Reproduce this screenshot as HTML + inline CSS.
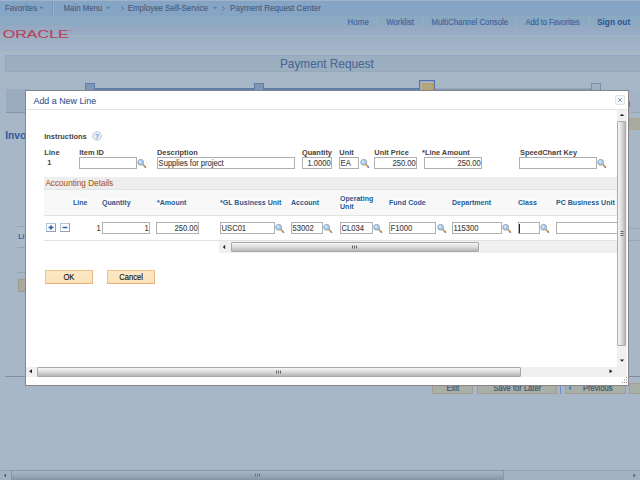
<!DOCTYPE html>
<html><head><meta charset="utf-8"><title>Payment Request</title>
<style>
html,body{margin:0;padding:0;overflow:hidden;}
body{width:640px;height:480px;overflow:hidden;position:relative;background:#a8b7c8;font-family:"Liberation Sans",Arial,sans-serif;font-size:7.5px;color:#3c3c3c;}
.a{position:absolute;white-space:nowrap;line-height:1;}
span.a{-webkit-text-stroke:0.12px;}
#nav{left:0;top:0;width:640px;height:16px;background:#86a5c5;border-top:1px solid #9fb3cb;box-sizing:border-box;}
#hdr{left:0;top:16px;width:640px;height:39px;background:linear-gradient(#8aaac1 0,#8ca9c1 9px,#95a9c3 10.5px,#9babc6 19px,#a0b6c5 19.5px,#9ab0c2 21px,#a0b0c8 27px,#a3b3cb 33.5px,#a0b6ba 34.5px,#a9b8c8 35.5px,#a9b8c8 39px);}
.sep{width:1px;height:9px;top:18px;background:#9bb2c8;}
#ttl{left:5px;top:55px;width:635px;border-right:0 !important;height:17px;background:#9bafc1;border:1px solid #96a9ba;box-sizing:border-box;}
.stop{width:10px;height:8px;top:83px;background:#7f97b4;border:1px solid #5f7ea6;box-sizing:border-box;}
.bbtn{top:383px;height:11px;background:#a7afa7;border:1px solid #a59c94;box-sizing:border-box;}
#dlg{left:25px;top:90px;width:604px;height:296px;background:#fff;border:1px solid #8a8488;border-top-color:#80848e;box-sizing:border-box;}
.in{background:#fff;border:1px solid #b0b0b0;box-sizing:border-box;font-size:7.6px;color:#464646;line-height:11.2px;padding:0 0.6px 0 1px;overflow:hidden;}
.r{text-align:right;}
.btn{background:linear-gradient(#fce8c6,#fbe2b8);border:1px solid #efc48c;border-bottom-color:#e6b078;border-right-color:#e9b882;box-sizing:border-box;height:14px;font-size:7.6px;color:#111;text-align:center;line-height:12.8px;}
.sbh{height:10px;background:#f0f0f0;}
.thh{height:10px;top:0px;background:linear-gradient(#f6f6f6,#dedede 45%,#b6b6b6);border:1px solid #a8a8a8;border-radius:1px;box-sizing:border-box;}
</style></head><body>
<div class="a" id="nav"></div>
<span class="a" style="left:5.00px;top:5px;font-size:7.8px;color:#485d7e;transform:scaleY(1.08);transform-origin:0 6px;">Favorites</span>
<span class="a" style="left:63.60px;top:5px;font-size:7.8px;color:#485d7e;transform:scaleY(1.08);transform-origin:0 6px;">Main Menu</span>
<span class="a" style="left:127.70px;top:5px;font-size:7.95px;color:#485d7e;transform:scaleY(1.08);transform-origin:0 6px;">Employee Self-Service</span>
<span class="a" style="left:230.00px;top:5px;font-size:8.1px;color:#485d7e;transform:scaleY(1.08);transform-origin:0 6px;">Payment Request Center</span>
<svg class="a" style="left:0;top:0" width="330" height="16"><path d="M39.300 6.800h4.400l-2.200 2.500zM106.200 6.800h4.400l-2.200 2.500zM213 6.800h4.400l-2.200 2.500z" fill="#5a7eae"/><path d="M222.300 6.500l2.200 2l-2.200 2M121.300 6.500l2.200 2l-2.200 2" stroke="#4f6588" stroke-width="0.800" fill="none"/></svg>
<div class="a" style="left:52px;top:1px;width:1px;height:15px;background:#7797b9"></div><div class="a" style="left:53px;top:1px;width:1px;height:15px;background:#94b1cf"></div>
<div class="a" id="hdr"></div>
<svg class="a" style="left:0;top:26px" width="80" height="16"><text x="2.800" y="12" font-family="Liberation Sans, Arial, sans-serif" font-size="11.500" fill="#b9455b" stroke="#b9455b" stroke-width="0.200" textLength="66" lengthAdjust="spacingAndGlyphs">ORACLE</text><circle cx="70.500" cy="4.500" r="0.600" fill="#b9455b"/></svg>
<span class="a" style="left:347.50px;top:19px;font-size:7.8px;color:#3b62a0;transform:scaleY(1.08);transform-origin:0 6px;letter-spacing:0.14px;">Home</span>
<span class="a" style="left:386.30px;top:19px;font-size:7.8px;color:#3b62a0;transform:scaleY(1.08);transform-origin:0 6px;letter-spacing:0px;">Worklist</span>
<span class="a" style="left:431.50px;top:19px;font-size:7.8px;color:#3b62a0;transform:scaleY(1.08);transform-origin:0 6px;letter-spacing:0.02px;">MultiChannel Console</span>
<span class="a" style="left:525.40px;top:19px;font-size:7.8px;color:#3b62a0;transform:scaleY(1.08);transform-origin:0 6px;letter-spacing:-0.16px;">Add to Favorites</span>
<span class="a" style="left:597.00px;top:18px;font-size:8.3px;color:#2c5391;font-weight:bold;-webkit-text-stroke:0;transform:scaleY(1.08);transform-origin:0 7px;">Sign out</span>
<div class="a sep" style="left:377px"></div><div class="a sep" style="left:422px"></div><div class="a sep" style="left:516px"></div><div class="a sep" style="left:589px"></div>
<div class="a" id="ttl"></div>
<span class="a" style="left:280.00px;top:59px;font-size:11.8px;color:#4b6896;transform:scaleY(1.08);transform-origin:0 9px;">Payment Request</span>
<div class="a" style="left:88px;top:88px;width:335px;height:2px;background:linear-gradient(#5676a4,#6d88ae)"></div>
<div class="a" style="left:433px;top:88px;width:160px;height:2px;background:linear-gradient(#9dacbe,#8393a8)"></div>
<div class="a stop" style="left:85px"></div>
<div class="a stop" style="left:254px"></div>
<div class="a stop" style="left:591px;background:#9eb0c4;border-color:#7d8ea3"></div>
<div class="a" style="left:419px;top:80px;width:16px;height:12px;border:1px solid #5474a6;box-shadow:inset 0 0 0 1px #8fa6c4;background:#b0bfd0;box-sizing:border-box"></div>
<div class="a" style="left:422px;top:83px;width:11px;height:8px;border:1px solid #c09a50;background:linear-gradient(#a8aa94,#b8a274);box-sizing:border-box"></div>
<div class="a" style="left:6px;top:89px;width:22px;height:23px;background:#9aabbe"></div>
<div class="a" style="left:6px;top:112px;width:22px;height:1px;background:#8496ac"></div>
<span class="a" style="left:5.20px;top:131px;font-size:10.2px;color:#2f5c9c;font-weight:bold;-webkit-text-stroke:0;transform:scaleY(1.08);transform-origin:0 8px;">Invo</span>
<div class="a" style="left:18px;top:227px;width:8px;height:20px;background:#abbac8"></div>
<span class="a" style="left:18.30px;top:233px;font-size:7.05px;color:#3564a8;font-weight:bold;-webkit-text-stroke:0;transform:scaleY(1.08);transform-origin:0 6px;">Li</span>
<div class="a" style="left:17px;top:226px;width:12px;height:1px;background:#94a4b7"></div>
<div class="a" style="left:17px;top:247px;width:12px;height:1px;background:#94a4b7"></div>
<div class="a" style="left:17px;top:272px;width:12px;height:1px;background:#94a4b7"></div>
<div class="a" style="left:18px;top:279px;width:10px;height:13px;background:#aaa9a0;border:1px solid #9c9a8e;box-sizing:border-box"></div>
<div class="a" style="left:5px;top:376px;width:24px;height:1px;background:#7f8ea2"></div>
<div class="a" style="left:629px;top:118px;width:11px;height:12px;background:#a9ab9f;border:1px solid #aca58f;border-right:0;box-sizing:border-box"></div>
<div class="a" style="left:627px;top:112px;width:13px;height:1px;background:#98a8bc"></div>
<div class="a" style="left:629px;top:90px;width:11px;height:22px;background:#a4b4c6"></div>
<div class="a" style="left:628px;top:101px;width:2px;height:6px;background:#5f86b8"></div>
<div class="a" style="left:627px;top:228px;width:13px;height:1px;background:#98a8bc"></div>
<div class="a" style="left:627px;top:240px;width:13px;height:1px;background:#98a8bc"></div>
<div class="a" style="left:627px;top:376px;width:13px;height:1px;background:#7f8ea2"></div>
<div class="a bbtn" style="left:432px;width:41px"></div>
<div class="a bbtn" style="left:477px;width:80px"></div>
<div class="a bbtn" style="left:565px;width:61px"></div>
<div class="a bbtn" style="left:629px;width:11px;border-right:0"></div>
<div class="a" style="left:560px;top:385px;width:1px;height:9px;background:#6f8fc0"></div>
<span class="a" style="left:446.50px;top:385px;font-size:7.6px;color:#3e4e68;transform:scaleY(1.08);transform-origin:0 6px;">Exit</span>
<span class="a" style="left:493.50px;top:385px;font-size:7.6px;color:#3e4e68;transform:scaleY(1.08);transform-origin:0 6px;">Save for Later</span>
<span class="a" style="left:583.00px;top:385px;font-size:7.6px;color:#3e4e68;transform:scaleY(1.08);transform-origin:0 6px;">Previous</span>
<svg class="a" style="left:567px;top:385px" width="6" height="7"><path d="M1.5 3L4 1V5Z" fill="#3f72c0"/></svg>
<div class="a" style="left:0;top:470px;width:640px;height:10px;background:#a3b2c3;border-top:1px solid #93a3b4;box-sizing:border-box"></div>
<div class="a" style="left:11px;top:470px;width:493px;height:10px;background:linear-gradient(#a6b6c6,#9aaaba 50%,#8898aa);border:1px solid #8496a8;box-sizing:border-box"></div>
<svg class="a" style="left:0;top:470px" width="640" height="10"><path d="M4 5.500L6 3.500V7.500ZM635.500 5.500L633.500 3.500V7.500Z" fill="#4a5666"/><path d="M255.500 3.500v3M257.500 3.500v3M259.500 3.500v3" stroke="#6a7a8c" stroke-width="1"/></svg>

<div class="a" id="dlg"></div>
<span class="a" style="left:33.50px;top:97px;font-size:8.9px;color:#3a5a92;transform:scaleY(1.08);transform-origin:0 7px;">Add a New Line</span>
<div class="a" style="left:26px;top:109px;width:602px;height:1px;background:#dfe6e6"></div>
<div class="a" style="left:615px;top:95px;width:10px;height:10px;border:1px solid #e2e4e6;background:#f5f6f7;box-sizing:border-box;border-radius:2px"></div>
<svg class="a" style="left:615px;top:95px" width="10" height="10"><path d="M3.300 3.300L6.700 6.700M6.700 3.300L3.300 6.700" stroke="#7f93aa" stroke-width="1" fill="none"/></svg>
<div class="a" style="left:617px;top:110px;width:10px;height:257px;background:#f0f0f0"></div>
<div class="a" style="left:617px;top:121px;width:9px;height:225px;background:linear-gradient(90deg,#f6f6f6,#e0e0e0 45%,#b8b8b8);border:1px solid #ababab;border-radius:1px;box-sizing:border-box"></div>
<svg class="a" style="left:617px;top:110px" width="10" height="257"><path d="M5 3.800L7.200 6H2.800Z M5 251.800L7.200 249.600H2.800Z" fill="#222"/><path d="M3.500 121.500h3M3.500 123.500h3M3.500 125.500h3" stroke="#666" stroke-width="1"/></svg>
<div class="a sbh" style="left:26px;top:367px;width:601px;"><div class="a thh" style="left:11px;width:484px"></div></div>
<svg class="a" style="left:26px;top:367px" width="601" height="10"><path d="M3 4.300L6 2.300V6.300Z M586.500 4.300L583.500 2.300V6.300Z" fill="#222"/><path d="M250.500 3.500v3M252.500 3.500v3M254.500 3.500v3" stroke="#666" stroke-width="1"/></svg>
<svg class="a" style="left:621px;top:377px" width="7" height="7"><path d="M5 0h1v1h-1zM3 2.500h1v1h-1zM5 2.500h1v1h-1zM1 5h1v1h-1zM3 5h1v1h-1zM5 5h1v1h-1z" fill="#8a8a8a"/></svg>

<span class="a" style="left:44.30px;top:133px;font-size:7.4px;color:#434343;font-weight:bold;-webkit-text-stroke:0;transform:scaleY(1.08);transform-origin:0 6px;">Instructions</span>
<svg class="a" style="left:92px;top:131px" width="10" height="10"><circle cx="5" cy="5" r="4.300" fill="#eaf0f7" stroke="#b4c5da" stroke-width="0.900"/><text x="5" y="7.500" font-size="6.800" font-weight="bold" text-anchor="middle" fill="#6a92c4" font-family="Liberation Sans, Arial, sans-serif">?</text></svg>
<span class="a" style="left:44.30px;top:149px;font-size:7.4px;color:#434343;font-weight:bold;-webkit-text-stroke:0;transform:scaleY(1.08);transform-origin:0 6px;">Line</span>
<span class="a" style="left:79.30px;top:149px;font-size:7.4px;color:#434343;font-weight:bold;-webkit-text-stroke:0;transform:scaleY(1.08);transform-origin:0 6px;">Item ID</span>
<span class="a" style="left:157.00px;top:149px;font-size:7.4px;color:#434343;font-weight:bold;-webkit-text-stroke:0;transform:scaleY(1.08);transform-origin:0 6px;">Description</span>
<span class="a" style="left:302.00px;top:149px;font-size:7.4px;color:#434343;font-weight:bold;-webkit-text-stroke:0;transform:scaleY(1.08);transform-origin:0 6px;">Quantity</span>
<span class="a" style="left:339.30px;top:149px;font-size:7.4px;color:#434343;font-weight:bold;-webkit-text-stroke:0;transform:scaleY(1.08);transform-origin:0 6px;">Unit</span>
<span class="a" style="left:374.30px;top:149px;font-size:7.4px;color:#434343;font-weight:bold;-webkit-text-stroke:0;transform:scaleY(1.08);transform-origin:0 6px;">Unit Price</span>
<span class="a" style="left:422.00px;top:149px;font-size:7.4px;color:#434343;font-weight:bold;-webkit-text-stroke:0;transform:scaleY(1.08);transform-origin:0 6px;">*Line Amount</span>
<span class="a" style="left:520.00px;top:149px;font-size:7.4px;color:#434343;font-weight:bold;-webkit-text-stroke:0;transform:scaleY(1.08);transform-origin:0 6px;">SpeedChart Key</span>
<span class="a" style="left:47.30px;top:159px;font-size:7.4px;color:#434343;font-weight:bold;-webkit-text-stroke:0;transform:scaleY(1.08);transform-origin:0 6px;">1</span>
<div class="a in" style="left:79px;top:157px;width:58px;height:12px;"></div>
<div class="a in" style="left:157px;top:157px;width:138px;height:12px;"></div><span class="a" style="left:158.60px;top:160px;font-size:7.6px;color:#444444;transform:scaleY(1.08);transform-origin:0 6px;">Supplies for project</span>
<div class="a in" style="left:302px;top:157px;width:30px;height:12px;"></div><span class="a" style="right:309.30px;top:160px;font-size:7.6px;color:#444444;transform:scaleY(1.08);transform-origin:0 6px;">1.0000</span>
<div class="a in" style="left:339px;top:157px;width:20px;height:12px;"></div><span class="a" style="left:340.60px;top:160px;font-size:7.6px;color:#444444;transform:scaleY(1.08);transform-origin:0 6px;">EA</span>
<div class="a in" style="left:374px;top:157px;width:43px;height:12px;"></div><span class="a" style="right:224.30px;top:160px;font-size:7.6px;color:#444444;transform:scaleY(1.08);transform-origin:0 6px;">250.00</span>
<div class="a in" style="left:424px;top:157px;width:58px;height:12px;"></div><span class="a" style="right:159.30px;top:160px;font-size:7.6px;color:#444444;transform:scaleY(1.08);transform-origin:0 6px;">250.00</span>
<div class="a in" style="left:519px;top:157px;width:78px;height:12px;"></div>
<svg class="a" style="left:136.5px;top:157px" width="12" height="12" viewBox="0 0 12 12"><path d="M5.8 7.4L8.0 9.7" stroke="#e59a3c" stroke-width="1.8" stroke-linecap="round"/><path d="M8.1 9.8L8.5 10.2" stroke="#5b8fd0" stroke-width="1.5" stroke-linecap="round"/><circle cx="3.7" cy="5.3" r="2.9" fill="#a3cdf5" stroke="#959fa8" stroke-width="0.9"/><circle cx="3.1" cy="4.6" r="1.2" fill="#d6ebfc"/></svg>
<svg class="a" style="left:359.5px;top:157px" width="12" height="12" viewBox="0 0 12 12"><path d="M5.8 7.4L8.0 9.7" stroke="#e59a3c" stroke-width="1.8" stroke-linecap="round"/><path d="M8.1 9.8L8.5 10.2" stroke="#5b8fd0" stroke-width="1.5" stroke-linecap="round"/><circle cx="3.7" cy="5.3" r="2.9" fill="#a3cdf5" stroke="#959fa8" stroke-width="0.9"/><circle cx="3.1" cy="4.6" r="1.2" fill="#d6ebfc"/></svg>
<svg class="a" style="left:597px;top:157px" width="12" height="12" viewBox="0 0 12 12"><path d="M5.8 7.4L8.0 9.7" stroke="#e59a3c" stroke-width="1.8" stroke-linecap="round"/><path d="M8.1 9.8L8.5 10.2" stroke="#5b8fd0" stroke-width="1.5" stroke-linecap="round"/><circle cx="3.7" cy="5.3" r="2.9" fill="#a3cdf5" stroke="#959fa8" stroke-width="0.9"/><circle cx="3.1" cy="4.6" r="1.2" fill="#d6ebfc"/></svg>
<div class="a" style="left:44px;top:177px;width:573px;height:12px;background:#eeeeee"></div>
<div class="a" style="left:44px;top:189px;width:573px;height:1px;background:#dfe6e6"></div>
<div class="a" style="left:44px;top:190px;width:573px;height:25px;background:#f8f8f8"></div>
<div class="a" style="left:44px;top:215px;width:573px;height:1px;background:#e0e2e2"></div>
<div class="a" style="left:44px;top:240px;width:573px;height:1px;background:#e0e2e2"></div>

<span class="a" style="left:45.40px;top:180px;font-size:8.2px;color:#b0652b;transform:scaleY(1.08);transform-origin:0 6px;">Accounting Details</span>
<span class="a" style="left:73.00px;top:199px;font-size:7.05px;color:#28588f;font-weight:bold;-webkit-text-stroke:0;transform:scaleY(1.08);transform-origin:0 6px;background:#fcfcfc;">Line</span>
<span class="a" style="left:102.00px;top:199px;font-size:7.05px;color:#28588f;font-weight:bold;-webkit-text-stroke:0;transform:scaleY(1.08);transform-origin:0 6px;background:#fcfcfc;">Quantity</span>
<span class="a" style="left:157.00px;top:199px;font-size:7.05px;color:#28588f;font-weight:bold;-webkit-text-stroke:0;transform:scaleY(1.08);transform-origin:0 6px;background:#fcfcfc;">*Amount</span>
<span class="a" style="left:220.00px;top:199px;font-size:7.05px;color:#28588f;font-weight:bold;-webkit-text-stroke:0;transform:scaleY(1.08);transform-origin:0 6px;background:#fcfcfc;">*GL Business Unit</span>
<span class="a" style="left:291.00px;top:199px;font-size:7.05px;color:#28588f;font-weight:bold;-webkit-text-stroke:0;transform:scaleY(1.08);transform-origin:0 6px;background:#fcfcfc;">Account</span>
<span class="a" style="left:340.00px;top:195px;font-size:7.05px;color:#28588f;font-weight:bold;-webkit-text-stroke:0;transform:scaleY(1.08);transform-origin:0 6px;background:#fcfcfc;">Operating</span>
<span class="a" style="left:340.00px;top:203px;font-size:7.05px;color:#28588f;font-weight:bold;-webkit-text-stroke:0;transform:scaleY(1.08);transform-origin:0 6px;background:#fcfcfc;">Unit</span>
<span class="a" style="left:389.00px;top:199px;font-size:7.05px;color:#28588f;font-weight:bold;-webkit-text-stroke:0;transform:scaleY(1.08);transform-origin:0 6px;background:#fcfcfc;">Fund Code</span>
<span class="a" style="left:452.00px;top:199px;font-size:7.05px;color:#28588f;font-weight:bold;-webkit-text-stroke:0;transform:scaleY(1.08);transform-origin:0 6px;background:#fcfcfc;">Department</span>
<span class="a" style="left:518.00px;top:199px;font-size:7.05px;color:#28588f;font-weight:bold;-webkit-text-stroke:0;transform:scaleY(1.08);transform-origin:0 6px;background:#fcfcfc;">Class</span>
<span class="a" style="left:556.00px;top:199px;font-size:7.05px;color:#28588f;font-weight:bold;-webkit-text-stroke:0;transform:scaleY(1.08);transform-origin:0 6px;background:#fcfcfc;">PC Business Unit</span>
<svg class="a" style="left:46px;top:223px" width="10" height="9" viewBox="0 0 10 9"><rect x="0.5" y="0.5" width="9" height="8" fill="#fdfdfd" stroke="#90a2b2" stroke-width="1"/><path d="M0.5 8.5V0.5H9.5" fill="none" stroke="#b3c6d6" stroke-width="1"/><path d="M2.6 4.5h4.8M5 2.2v4.6" stroke="#1f5aa8" stroke-width="1.4" fill="none"/></svg>
<svg class="a" style="left:60px;top:223px" width="10" height="9" viewBox="0 0 10 9"><rect x="0.5" y="0.5" width="9" height="8" fill="#fdfdfd" stroke="#90a2b2" stroke-width="1"/><path d="M0.5 8.5V0.5H9.5" fill="none" stroke="#b3c6d6" stroke-width="1"/><path d="M2.6 4.5h4.8" stroke="#1f5aa8" stroke-width="1.4" fill="none"/></svg>
<span class="a" style="left:96.50px;top:225px;font-size:7.6px;color:#4a4640;transform:scaleY(1.08);transform-origin:0 6px;">1</span>
<div class="a in" style="left:102px;top:222px;width:48px;height:12px;"></div><span class="a" style="right:491.30px;top:225px;font-size:7.6px;color:#444444;transform:scaleY(1.08);transform-origin:0 6px;">1</span>
<div class="a in" style="left:156px;top:222px;width:43px;height:12px;"></div><span class="a" style="right:442.30px;top:225px;font-size:7.6px;color:#444444;transform:scaleY(1.08);transform-origin:0 6px;">250.00</span>
<div class="a in" style="left:220px;top:222px;width:55px;height:12px;"></div><span class="a" style="left:221.60px;top:225px;font-size:7.6px;color:#444444;transform:scaleY(1.08);transform-origin:0 6px;">USC01</span>
<div class="a in" style="left:291px;top:222px;width:32px;height:12px;"></div><span class="a" style="left:292.60px;top:225px;font-size:7.6px;color:#444444;transform:scaleY(1.08);transform-origin:0 6px;">53002</span>
<div class="a in" style="left:340px;top:222px;width:33px;height:12px;"></div><span class="a" style="left:341.60px;top:225px;font-size:7.6px;color:#444444;transform:scaleY(1.08);transform-origin:0 6px;">CL034</span>
<div class="a in" style="left:389px;top:222px;width:47px;height:12px;"></div><span class="a" style="left:390.60px;top:225px;font-size:7.6px;color:#444444;transform:scaleY(1.08);transform-origin:0 6px;">F1000</span>
<div class="a in" style="left:452px;top:222px;width:50px;height:12px;"></div><span class="a" style="left:453.60px;top:225px;font-size:7.6px;color:#444444;transform:scaleY(1.08);transform-origin:0 6px;">115300</span>
<div class="a in" style="left:518px;top:222px;width:22px;height:12px;"></div>
<div class="a" style="left:519px;top:224px;width:1px;height:9px;background:#222"></div>
<div class="a in" style="left:556px;top:222px;width:61px;height:12px;border-right:0;"></div>
<svg class="a" style="left:274.5px;top:222px" width="12" height="12" viewBox="0 0 12 12"><path d="M5.8 7.4L8.0 9.7" stroke="#e59a3c" stroke-width="1.8" stroke-linecap="round"/><path d="M8.1 9.8L8.5 10.2" stroke="#5b8fd0" stroke-width="1.5" stroke-linecap="round"/><circle cx="3.7" cy="5.3" r="2.9" fill="#a3cdf5" stroke="#959fa8" stroke-width="0.9"/><circle cx="3.1" cy="4.6" r="1.2" fill="#d6ebfc"/></svg>
<svg class="a" style="left:322.5px;top:222px" width="12" height="12" viewBox="0 0 12 12"><path d="M5.8 7.4L8.0 9.7" stroke="#e59a3c" stroke-width="1.8" stroke-linecap="round"/><path d="M8.1 9.8L8.5 10.2" stroke="#5b8fd0" stroke-width="1.5" stroke-linecap="round"/><circle cx="3.7" cy="5.3" r="2.9" fill="#a3cdf5" stroke="#959fa8" stroke-width="0.9"/><circle cx="3.1" cy="4.6" r="1.2" fill="#d6ebfc"/></svg>
<svg class="a" style="left:372.5px;top:222px" width="12" height="12" viewBox="0 0 12 12"><path d="M5.8 7.4L8.0 9.7" stroke="#e59a3c" stroke-width="1.8" stroke-linecap="round"/><path d="M8.1 9.8L8.5 10.2" stroke="#5b8fd0" stroke-width="1.5" stroke-linecap="round"/><circle cx="3.7" cy="5.3" r="2.9" fill="#a3cdf5" stroke="#959fa8" stroke-width="0.9"/><circle cx="3.1" cy="4.6" r="1.2" fill="#d6ebfc"/></svg>
<svg class="a" style="left:436.5px;top:222px" width="12" height="12" viewBox="0 0 12 12"><path d="M5.8 7.4L8.0 9.7" stroke="#e59a3c" stroke-width="1.8" stroke-linecap="round"/><path d="M8.1 9.8L8.5 10.2" stroke="#5b8fd0" stroke-width="1.5" stroke-linecap="round"/><circle cx="3.7" cy="5.3" r="2.9" fill="#a3cdf5" stroke="#959fa8" stroke-width="0.9"/><circle cx="3.1" cy="4.6" r="1.2" fill="#d6ebfc"/></svg>
<svg class="a" style="left:501.5px;top:222px" width="12" height="12" viewBox="0 0 12 12"><path d="M5.8 7.4L8.0 9.7" stroke="#e59a3c" stroke-width="1.8" stroke-linecap="round"/><path d="M8.1 9.8L8.5 10.2" stroke="#5b8fd0" stroke-width="1.5" stroke-linecap="round"/><circle cx="3.7" cy="5.3" r="2.9" fill="#a3cdf5" stroke="#959fa8" stroke-width="0.9"/><circle cx="3.1" cy="4.6" r="1.2" fill="#d6ebfc"/></svg>
<svg class="a" style="left:539.5px;top:222px" width="12" height="12" viewBox="0 0 12 12"><path d="M5.8 7.4L8.0 9.7" stroke="#e59a3c" stroke-width="1.8" stroke-linecap="round"/><path d="M8.1 9.8L8.5 10.2" stroke="#5b8fd0" stroke-width="1.5" stroke-linecap="round"/><circle cx="3.7" cy="5.3" r="2.9" fill="#a3cdf5" stroke="#959fa8" stroke-width="0.9"/><circle cx="3.1" cy="4.6" r="1.2" fill="#d6ebfc"/></svg>
<div class="a sbh" style="left:219px;top:241px;width:398px;height:12px"><div class="a thh" style="left:12px;top:1px;width:248px"></div></div>
<svg class="a" style="left:219px;top:241px" width="398" height="12"><path d="M3.800 6L6.200 3.800V8.200Z" fill="#222"/><path d="M133.500 4.500v3M135.500 4.500v3M137.500 4.500v3" stroke="#666" stroke-width="1"/></svg>
<div class="a btn" style="left:45px;top:270px;width:48px"></div>
<div class="a btn" style="left:107px;top:270px;width:48px"></div>

<span class="a" style="left:63.50px;top:274px;font-size:7.6px;color:#111;transform:scaleY(1.08);transform-origin:0 6px;letter-spacing:-0.2px;">OK</span>
<span class="a" style="left:119.30px;top:274px;font-size:7.6px;color:#111;transform:scaleY(1.08);transform-origin:0 6px;">Cancel</span>
</body></html>
